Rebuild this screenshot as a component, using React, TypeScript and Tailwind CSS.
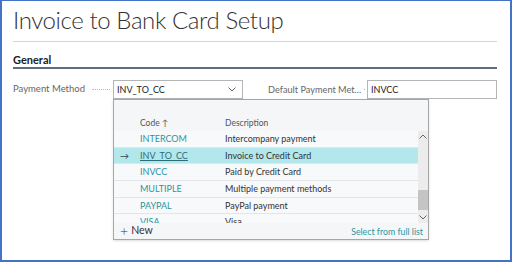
import React from 'react';

const rows = [
  { code: 'INTERCOM', desc: 'Intercompany payment' },
  { code: 'INV_TO_CC', desc: 'Invoice to Credit Card', selected: true },
  { code: 'INVCC', desc: 'Paid by Credit Card' },
  { code: 'MULTIPLE', desc: 'Multiple payment methods' },
  { code: 'PAYPAL', desc: 'PayPal payment' },
  { code: 'VISA', desc: 'Visa' },
];

function Chevron({ up = false }: { up?: boolean }) {
  return (
    <svg width="8" height="5" viewBox="0 0 8 5" className={up ? 'rotate-180' : ''}>
      <path d="M0.5 0.5 L4 4 L7.5 0.5" fill="none" stroke="#666" strokeWidth="1" />
    </svg>
  );
}

function Lookup() {
  return (
    <div className="absolute left-0 top-full z-10 flex h-[141px] w-[316px] flex-col border border-[#a6a6a6] bg-[#f5f6f8] shadow-sm">
      <div className="h-[17px]" />
      <div className="flex h-[16px] items-center text-[8.5px] text-[#555]">
        <span className="w-[26px]" />
        <span className="w-[85px]">Code ↑</span>
        <span>Description</span>
      </div>
      <div className="flex h-[92px]">
        <div className="flex-1 overflow-hidden">
          {rows.map((r) => (
            <div
              key={r.code}
              className={
                'flex h-[16.6px] shrink-0 items-center border-b border-[#e3e5e8] text-[9px] ' +
                (r.selected ? 'bg-[#b2e7eb]' : 'bg-[#f8f9fa]')
              }
            >
              <span className="w-[26px] pl-[6px] text-[#444]">{r.selected ? '→' : ''}</span>
              <span
                className={
                  'w-[85px] ' + (r.selected ? 'text-[#2a6f78] underline' : 'text-[#2b95a0]')
                }
              >
                {r.code}
              </span>
              <span className="text-[#333]">{r.desc}</span>
            </div>
          ))}
        </div>
        <div className="flex w-[10px] flex-col items-center bg-[#ececec] py-[3px]">
          <Chevron up />
          <div className="flex-1" />
          <div className="mb-[5px] h-[20px] w-[10px] bg-[#c4c4c4]" />
          <Chevron />
        </div>
      </div>
      <div className="flex flex-1 items-center justify-between pl-[6px] pr-[5px]">
        <span className="flex items-center gap-[3px] text-[10.5px] text-[#333]">
          <span className="text-[14px] font-light leading-none">+</span>New
        </span>
        <span className="text-[8.8px] text-[#2b95a0]">Select from full list</span>
      </div>
    </div>
  );
}

export default function App() {
  return (
    <div
      className="flex h-[262px] w-[512px] flex-col border-x-2 border-b-2 border-t border-[#4472c4] bg-white pl-[11px] pr-[13px]"
      style={{ fontFamily: 'Lato, "Open Sans", sans-serif' }}
    >
      <h1 className="mt-[4px] text-[24px] font-light leading-[30px] tracking-[-0.4px] text-[#333]">
        Invoice to Bank Card Setup
      </h1>
      <div className="mt-[6px] h-px bg-[#d6d6d6]" />
      <div className="mt-[10px] border-b-2 border-[#5d6c80] text-[11px] font-bold leading-[15px] text-[#222]">
        General
      </div>
      <div className="mt-[11px] flex items-center whitespace-nowrap">
        <div className="flex w-[100px] items-center text-[9.5px] text-[#666]">
          <span>Payment Method</span>
          <span className="ml-[7px] mr-[3px] flex-1 border-b border-dotted border-[#bbb]" />
        </div>
        <div className="relative">
          <div className="flex h-[19px] w-[130px] items-center justify-between border border-[#b5b5b5] pl-[3px] pr-[6px] text-[9px] text-[#222]">
            <span>INV_TO_CC</span>
            <Chevron />
          </div>
          <Lookup />
        </div>
        <div className="ml-[25px] flex w-[99px] items-center text-[9.2px] text-[#666]">
          <span>Default Payment Met...</span>
          <span className="ml-[3px] mr-[2px] flex-1 border-b border-dotted border-[#bbb]" />
        </div>
        <div className="flex h-[19px] w-[130px] items-center border border-[#b5b5b5] pl-[3px] text-[9px] text-[#222]">
          INVCC
        </div>
      </div>
    </div>
  );
}
